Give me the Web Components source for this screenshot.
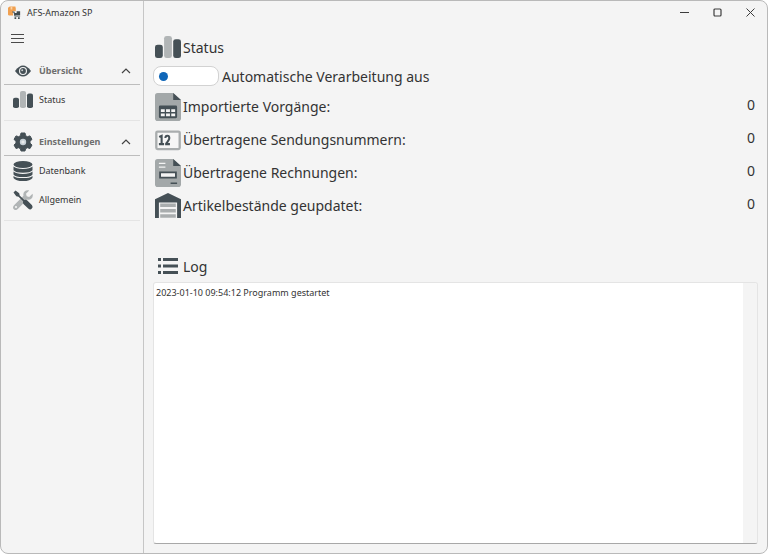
<!DOCTYPE html>
<html lang="de">
<head>
<meta charset="utf-8">
<meta name="viewport" content="width=device-width, initial-scale=1">
<title>AFS-Amazon SP</title>
<style>
  html, body {
    margin: 0;
    height: 100%;
    background: #ffffff;
  }
  body {
    font-family: "Noto Sans", sans-serif;
    color: #333333;
  }
</style>
</head>
<body>
<app-window>
  <side-bar slot="side" name="AFS-Amazon SP">
    <nav-group label="Übersicht" icon="eye">
      <nav-item label="Status" icon="bars"></nav-item>
    </nav-group>
    <nav-group label="Einstellungen" icon="gear">
      <nav-item label="Datenbank" icon="database"></nav-item>
      <nav-item label="Allgemein" icon="tools"></nav-item>
    </nav-group>
  </side-bar>
  <window-controls></window-controls>
  <section-title label="Status" icon="bars"></section-title>
  <toggle-switch label="Automatische Verarbeitung aus"></toggle-switch>
  <status-list>
    <status-row label="Importierte Vorgänge:" value="0" icon="sheet"></status-row>
    <status-row label="Übertragene Sendungsnummern:" value="0" icon="number"></status-row>
    <status-row label="Übertragene Rechnungen:" value="0" icon="invoice"></status-row>
    <status-row label="Artikelbestände geupdatet:" value="0" icon="warehouse"></status-row>
  </status-list>
  <section-title label="Log" icon="list"></section-title>
  <log-view>2023-01-10 09:54:12 Programm gestartet</log-view>
</app-window>

<script>
const icons = {
  logo: `
    <path fill="#f0a050" d="M0 2l2-1.500h6.500L9 3v3H6v5H1L0 10z"/>
    <path fill="#fbd3a5" d="M3 1h2v3H3z"/>
    <path fill="none" stroke="#f4f4f4" stroke-width="3" d="M6 7.500h1l1 4.500h6"/>
    <path fill="none" stroke="#3f4a4e" stroke-width="1.200" d="M5 7h2l1 4.500h6"/>
    <path fill="#3f4a4e" d="M8 8h2V6h4v4.500H8zM7.500 13h2v2h-2zm4 0h2v2h-2z"/>`,
  eye: `
    <path fill="#455056" d="M2 10Q6 4.500 10 4.500t8 5.500q-4 5.500-8 5.500t-8-5.500z"/>
    <circle cx="10" cy="10" r="4" fill="#f4f4f4"/>
    <circle cx="10" cy="10" r="2.900" fill="#455056"/>
    <circle cx="9.200" cy="9.200" r="1" fill="#c8cccd"/>`,
  bars: `
    <rect x="0" y="8" width="6" height="12" rx="2" fill="#455056"/>
    <rect x="7" y="0" width="6" height="20" rx="2" fill="#b1b5b6"/>
    <rect x="14" y="3" width="6" height="17" rx="2" fill="#455056"/>`,
  gear: `
    <path fill="#455056" stroke="#455056" stroke-width="1" stroke-linejoin="round" d="M8 1h4l.6 2.700 1.800 1 2.600-.8 2 3.500-2 1.800v2l2 1.800-2 3.500-2.600-.8-1.800 1L12 19H8l-.6-2.300-1.800-1-2.600.8L1 13l2-1.800v-2L1 7.400l2-3.500 2.600.8 1.800-1z"/>
    <circle cx="10" cy="10" r="3.200" fill="#c7d0d6"/>
    <circle cx="10" cy="10" r="1.600" fill="#e8eaeb"/>`,
  database: `
    <ellipse cx="10" cy="3.500" rx="9.500" ry="3.500" fill="#455056"/>
    <path fill="#455056" d="M.5 5.600q2.500 2.400 9.500 2.400t9.500-2.400v3.600q-2 2.500-9.500 2.500T.5 9.200zM.5 10.600q2.500 2.300 9.500 2.300t9.500-2.300v2.800q-2 2.600-9.500 2.600t-9.500-2.600zM.5 14.900q2.500 2.200 9.500 2.200t9.500-2.200v2q-2 3.100-9.500 3.100t-9.500-3.100z"/>`,
  tools: `
    <path fill="#b1b5b6" d="M19.500 3.800l-3.300 3.200-2.500-.7-.7-2.500L16.200.5c-3.500-1.200-6.700 1.800-5.700 5.300L1 15.300c-2.800 3 1 6.600 3.800 3.800l9.400-9.500c3.600 1 6.500-2.300 5.300-5.800z"/>
    <circle cx="3" cy="17" r="1.100" fill="#f4f4f4"/>
    <path fill="#455056" d="M2.500.5l3.700 2.800.5 2.200 4.600 4.600q1.800-.7 3 .5l4.500 4.500q1.500 1.800 0 3.500t-3.600 0l-4.500-4.400q-1.200-1.300-.5-3L5.500 6.700l-2.200-.5L.5 2.500z"/>`,
  sheet: `
    <path fill="#a3a8a9" d="M2 0h12l6 5v13q0 2-2 2H2q-2 0-2-2V2q0-2 2-2z"/>
    <path fill="#455056" d="M14 0l6 5h-6zM3 10q0-1 1-1h12q1 0 1 1v7q0 1-1 1H4q-1 0-1-1z"/>
    <path fill="#f4f4f4" d="M4.500 11.600h3v2h-3zm4 0h3v2h-3zm4 0h3v2h-3zm-8 3h3v2h-3zm4 0h3v2h-3zm4 0h3v2h-3z"/>`,
  number: `
    <rect x="1" y="3.500" width="18" height="13.500" rx="1" fill="#f6f6f6" stroke="#a9adae" stroke-width="1.800"/>
    <path fill="none" stroke="#455056" stroke-width="1.600" d="M3.200 7.600l1.900-.8v6.400M3 13.200h4M8 8.500q0-1.800 1.500-1.800T11 8.500q0 1.500-2.600 4.600M7.800 13.200h3.700"/>`,
  invoice: `
    <path fill="#a3a8a9" d="M2 0h12l6 5v13q0 2-2 2H2q-2 0-2-2V2q0-2 2-2z"/>
    <path fill="#455056" d="M14 0l6 5h-6zM12 16.800h5v1h-5zM3.200 9h13.600v5H3.200z"/>
    <path fill="#f4f4f4" d="M4.600 10.200h10.800v2.500H4.600zM3 2.600h5v1H3zm0 2.700h5v1H3z"/>`,
  warehouse: `
    <path fill="#455056" d="M0 20V5l10-5 10 5v15h-3V7.500H3V20z"/>
    <path fill="#a9adae" d="M4 8.400h12v2.800H4zm0 4.300h12v2.800H4zm0 4.300h12v2.800H4z"/>`,
  list: `
    <path fill="#455056" d="M0 2h3v3H0zm5 0h15v3H5zM0 8.500h3v3H0zm5 0h15v3H5zM0 15h3v3H0zm5 0h15v3H5z"/>`
}

function icon (name, w, h) {
  const box = name === 'logo' ? '0 0 15 15' : '0 0 20 20'
  return `<svg width="${w}" height="${h || w}" viewBox="${box}" preserveAspectRatio="none" aria-hidden="true">${icons[name]}</svg>`
}

class AppWindow extends HTMLElement {
  constructor () {
    super()
    this.attachShadow({ mode: 'open' }).innerHTML = `
      <style>
        :host {
          display: grid;
          grid-template-columns: 143px minmax(0, 1fr);
          box-sizing: border-box;
          min-height: 100vh;
          border: 1px solid #b9b9b9;
          border-radius: 8px;
          background: #f4f4f4;
          overflow: hidden;
        }
        aside {
          box-sizing: border-box;
          border-right: 1px solid #c6c6c6;
        }
        main {
          display: flex;
          flex-direction: column;
          padding: 0 9px 9px;
        }
      </style>
      <aside><slot name="side"></slot></aside>
      <main><slot></slot></main>
    `
  }
}

class SideBar extends HTMLElement {
  connectedCallback () {
    this.attachShadow({ mode: 'open' }).innerHTML = `
      <style>
        :host {
          display: block;
          padding: 0 3px;
        }
        header {
          display: flex;
          align-items: center;
          gap: 6px;
          height: 22px;
          padding-left: 4px;
          font-size: 9px;
          white-space: nowrap;
        }
        .menu {
          display: flex;
          align-items: center;
          height: 30px;
          padding: 0 7px;
          border: none;
          background: transparent;
        }
      </style>
      <header>${icon('logo', 13)}<span>${this.getAttribute('name')}</span></header>
      <button class="menu" aria-label="Menü">
        <svg width="13" height="11" viewBox="0 0 13 11"><path stroke="#4a4a4a" d="M0 1.500h13M0 5.500h13M0 9.500h13"/></svg>
      </button>
      <nav><slot></slot></nav>
    `
  }
}

class NavGroup extends HTMLElement {
  connectedCallback () {
    this.attachShadow({ mode: 'open' }).innerHTML = `
      <style>
        :host {
          display: block;
          margin: 4px 0 7px;
          border-bottom: 1px solid #e4e4e4;
        }
        :host(:last-child) {
          margin-bottom: 0;
        }
        button {
          display: flex;
          align-items: center;
          gap: 6px;
          box-sizing: border-box;
          width: 100%;
          height: 28px;
          padding: 0 9px;
          border: none;
          border-bottom: 1px solid #bdbdbd;
          background: transparent;
          color: #6e6e6e;
          font: bold 9px "Noto Sans", sans-serif;
        }
        span {
          flex: 1;
          text-align: left;
        }
        .items {
          padding-bottom: 6px;
        }
      </style>
      <button aria-expanded="true">
        ${icon(this.getAttribute('icon'), 20)}
        <span>${this.getAttribute('label')}</span>
        <svg width="10" height="6" viewBox="0 0 10 6"><path fill="none" stroke="#444" stroke-width="1.200" d="M1 5l4-4 4 4"/></svg>
      </button>
      <div class="items"><slot></slot></div>
    `
  }
}

class NavItem extends HTMLElement {
  connectedCallback () {
    this.attachShadow({ mode: 'open' }).innerHTML = `
      <style>
        :host {
          display: block;
        }
        a {
          display: flex;
          align-items: center;
          gap: 6px;
          height: 29px;
          padding: 0 9px;
          color: inherit;
          font-size: 9px;
          text-decoration: none;
        }
      </style>
      <a href="#${this.getAttribute('label')}">${icon(this.getAttribute('icon'), 20, this.getAttribute('icon') === 'bars' ? 17 : 20)}<span>${this.getAttribute('label')}</span></a>
    `
  }
}

class WindowControls extends HTMLElement {
  constructor () {
    super()
    this.attachShadow({ mode: 'open' }).innerHTML = `
      <style>
        :host {
          display: flex;
          justify-content: flex-end;
          height: 22px;
        }
        button {
          display: grid;
          place-items: center;
          width: 33px;
          padding: 0;
          border: none;
          background: transparent;
        }
        button:last-child {
          margin-right: -9px;
        }
        svg {
          fill: none;
          stroke: #3c3c3c;
        }
      </style>
      <button aria-label="Minimieren"><svg width="9" height="9"><path d="M0 4.500h9"/></svg></button>
      <button aria-label="Maximieren"><svg width="9" height="9"><rect x="1" y="1" width="7" height="7" rx="1" stroke-width="1.200"/></svg></button>
      <button aria-label="Schließen"><svg width="9" height="9"><path d="M.5.5l8 8M8.500.5l-8 8"/></svg></button>
    `
  }
}

class SectionTitle extends HTMLElement {
  connectedCallback () {
    const name = this.getAttribute('icon')
    this.attachShadow({ mode: 'open' }).innerHTML = `
      <style>
        :host {
          display: block;
          margin-top: 8px;
        }
        h2 {
          display: flex;
          align-items: center;
          gap: 2px;
          height: 32px;
          margin: 0;
          padding-left: 2px;
          font-size: 14px;
          font-weight: normal;
        }
        i {
          display: grid;
          place-items: center;
          width: 26px;
        }
      </style>
      <h2><i>${name === 'list' ? icon(name, 20) : icon(name, 26, 22)}</i>${this.getAttribute('label')}</h2>
    `
  }
}

class ToggleSwitch extends HTMLElement {
  connectedCallback () {
    this.attachShadow({ mode: 'open' }).innerHTML = `
      <style>
        :host {
          display: block;
        }
        label {
          display: flex;
          align-items: center;
          gap: 3px;
          height: 26px;
          font-size: 14px;
        }
        input {
          appearance: none;
          display: flex;
          align-items: center;
          box-sizing: border-box;
          width: 66px;
          height: 20px;
          margin: 0;
          padding: 0 5px;
          border: 1px solid #d2d2d2;
          border-radius: 8px;
          background: #fff;
        }
        input::before {
          content: "";
          width: 9px;
          height: 9px;
          border-radius: 50%;
          background: #0f66b8;
        }
        input:checked {
          justify-content: flex-end;
        }
      </style>
      <label><input type="checkbox" role="switch">${this.getAttribute('label')}</label>
    `
  }
}

class StatusList extends HTMLElement {
  constructor () {
    super()
    this.attachShadow({ mode: 'open' }).innerHTML = `
      <style>
        :host {
          display: block;
          margin: 1px 0 20px;
        }
      </style>
      <slot></slot>
    `
  }
}

class StatusRow extends HTMLElement {
  connectedCallback () {
    const name = this.getAttribute('icon')
    this.attachShadow({ mode: 'open' }).innerHTML = `
      <style>
        :host {
          display: flex;
          align-items: center;
          gap: 2px;
          min-height: 33px;
          padding: 0 3px 0 2px;
          font-size: 14px;
        }
        span {
          flex: 1;
        }
        output {
          padding-bottom: 4px;
        }
      </style>
      ${icon(name, 26, name === 'number' ? 26 : name === 'warehouse' ? 25 : 28)}
      <span id="label">${this.getAttribute('label')}</span>
      <output aria-labelledby="label">${this.getAttribute('value')}</output>
    `
  }
}

class LogView extends HTMLElement {
  connectedCallback () {
    this.attachShadow({ mode: 'open' }).innerHTML = `
      <style>
        :host {
          display: flex;
          flex: 1;
          border: 1px solid #e4e4e4;
          border-bottom-color: #a8a8a8;
          border-radius: 3px;
          background: #fff;
          overflow: hidden;
        }
        textarea {
          flex: 1;
          min-width: 0;
          padding: 3px 2px;
          border: none;
          outline: none;
          resize: none;
          background: transparent;
          color: inherit;
          font: 9px/13px "Noto Sans", sans-serif;
        }
        .track {
          width: 14px;
          background: #f4f4f4;
        }
      </style>
      <textarea readonly aria-label="Log"></textarea>
      <div class="track"></div>
    `
    this.shadowRoot.querySelector('textarea').value = this.textContent
  }
}

customElements.define('app-window', AppWindow)
customElements.define('side-bar', SideBar)
customElements.define('nav-group', NavGroup)
customElements.define('nav-item', NavItem)
customElements.define('window-controls', WindowControls)
customElements.define('section-title', SectionTitle)
customElements.define('toggle-switch', ToggleSwitch)
customElements.define('status-list', StatusList)
customElements.define('status-row', StatusRow)
customElements.define('log-view', LogView)
</script>
</body>
</html>
